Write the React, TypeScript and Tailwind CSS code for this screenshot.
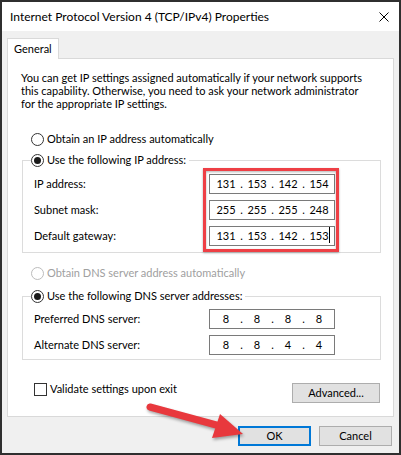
import React from 'react'

function Radio({ checked, disabled }: { checked?: boolean; disabled?: boolean }) {
  return (
    <span
      className={`w-[13px] h-[13px] rounded-full border bg-white flex items-center justify-center shrink-0 ${
        disabled ? 'border-[#bcbcbc]' : 'border-[#333333]'
      }`}
    >
      {checked && <span className="w-[7px] h-[7px] rounded-full bg-[#1a1a1a]" />}
    </span>
  )
}

function IpBox({ parts, caret }: { parts: string[]; caret?: boolean }) {
  return (
    <div className="w-[126px] h-[20px] border border-[#7a7a7a] bg-white flex items-center pl-[4px]">
      {parts.map((p, i) => (
        <React.Fragment key={i}>
          {i > 0 && <span className="w-[7px] text-center">.</span>}
          <span className="w-[24px] text-center relative">
            {p}
            {caret && i === 3 && (
              <span className="absolute right-[1px] top-[-2px] w-px h-[16px] bg-black" />
            )}
          </span>
        </React.Fragment>
      ))}
    </div>
  )
}

function Row({ label, parts, caret }: { label: string; parts: string[]; caret?: boolean }) {
  return (
    <div className="flex items-center justify-between h-[20px] pr-[45px]">
      <span>{label}</span>
      <IpBox parts={parts} caret={caret} />
    </div>
  )
}

export default function App() {
  return (
    <div className="relative w-[401px] h-[455px] border-2 border-[#2f2f2f] bg-[#f0f0f0] flex flex-col overflow-hidden font-['Lato','Noto_Sans',sans-serif] text-[11px] text-black leading-[14px]">
      {/* title bar */}
      <div className="h-[29px] bg-white flex items-center justify-between pl-[8px] pr-[10px] shrink-0">
        <span className="text-[12px]">Internet Protocol Version 4 (TCP/IPv4) Properties</span>
        <svg width="10" height="10" viewBox="0 0 10 10" className="text-black">
          <path d="M0.5 0.5 L9.5 9.5 M9.5 0.5 L0.5 9.5" stroke="currentColor" strokeWidth="1" />
        </svg>
      </div>

      <div className="pt-[7px] px-[5px]">
        <div className="relative z-10 -mb-px w-[52px] h-[21px] bg-white border border-b-0 border-[#d9d9d9] flex items-center pl-[6px] pb-px">
          General
        </div>
        <div className="relative h-[359px] bg-white border border-[#d9d9d9]">
          <div className="pt-[12px] pl-[13px] leading-[13px]">
            <div>You can get IP settings assigned automatically if your network supports</div>
            <div>this capability. Otherwise, you need to ask your network administrator</div>
            <div>for the appropriate IP settings.</div>
          </div>

          <div className="mt-[22px] ml-[23px] flex items-center gap-[3px] h-[14px]">
            <Radio />
            <span>Obtain an IP address automatically</span>
          </div>

          <fieldset className="mt-[7px] ml-[14px] w-[359px] border border-[#dcdcdc] pl-[11px] pt-[7px] pb-[6px]">
            <legend className="ml-[-3px] pr-[3px] flex items-center gap-[3px] h-[14px]">
              <Radio checked />
              <span>Use the following IP address:</span>
            </legend>
            <div className="flex flex-col gap-[6px]">
              <Row label="IP address:" parts={['131', '153', '142', '154']} />
              <Row label="Subnet mask:" parts={['255', '255', '255', '248']} />
              <Row label="Default gateway:" parts={['131', '153', '142', '153']} caret />
            </div>
          </fieldset>

          <div className="mt-[13px] ml-[23px] flex items-center gap-[3px] h-[14px] text-[#a0a0a0]">
            <Radio disabled />
            <span>Obtain DNS server address automatically</span>
          </div>

          <fieldset className="mt-[9px] ml-[14px] w-[359px] border border-[#dcdcdc] pl-[11px] pt-[6px] pb-[4px]">
            <legend className="ml-[-3px] pr-[3px] flex items-center gap-[3px] h-[14px]">
              <Radio checked />
              <span>Use the following DNS server addresses:</span>
            </legend>
            <div className="flex flex-col gap-[6px]">
              <Row label="Preferred DNS server:" parts={['8', '8', '8', '8']} />
              <Row label="Alternate DNS server:" parts={['8', '8', '4', '4']} />
            </div>
          </fieldset>

          <div className="mt-[23px] ml-[26px] mr-[13px] flex items-start justify-between">
            <div className="flex items-center gap-[3px] h-[12px]">
              <span className="w-[13px] h-[13px] border border-[#333333] bg-white" />
              <span>Validate settings upon exit</span>
            </div>
            <button className="w-[88px] h-[20px] bg-[#e1e1e1] border border-[#adadad]">Advanced...</button>
          </div>

          {/* red highlight */}
          <div className="absolute left-[195px] top-[109px] w-[136px] h-[84px] border-[3px] border-[#ee3f45] drop-shadow-[0_1px_1px_rgba(0,0,0,0.3)]" />
        </div>

        <div className="mt-[9px] flex justify-end gap-[8px] pr-[2px]">
          <button className="w-[73px] h-[20px] bg-[#e1e1e1] border-2 border-[#0078d7]">OK</button>
          <button className="w-[73px] h-[20px] bg-[#e1e1e1] border border-[#adadad]">Cancel</button>
        </div>
      </div>

      {/* red arrow */}
      <svg
        className="absolute left-[-2px] top-[-2px] pointer-events-none"
        width="401"
        height="455"
        viewBox="0 0 401 455"
        style={{ filter: 'drop-shadow(1px 2px 1.5px rgba(0,0,0,0.35))' }}
      >
        <line x1="150" y1="407" x2="220" y2="426" stroke="#e8383d" strokeWidth="7" strokeLinecap="round" />
        <polygon points="243,434 212,438 220,414" fill="#e8383d" />
      </svg>
    </div>
  )
}
